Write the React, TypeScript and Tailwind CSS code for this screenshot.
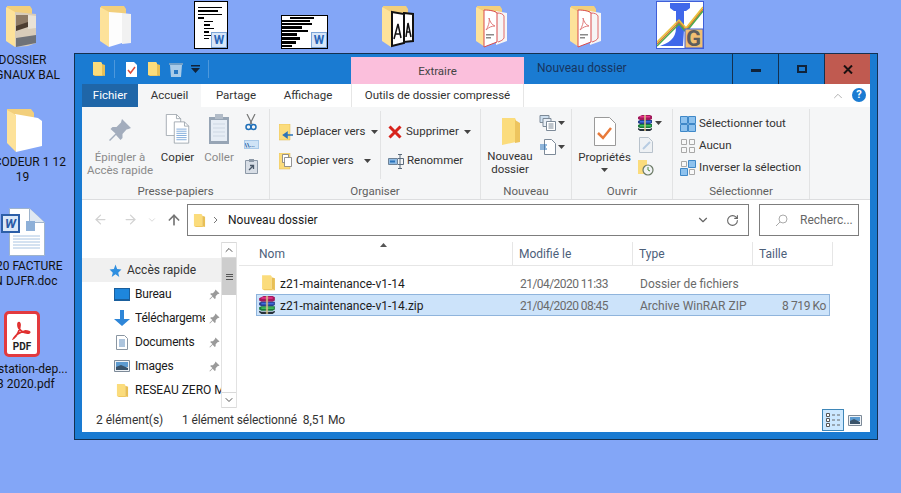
import { ArrowLeft, ArrowRight, ArrowUp, ChevronDown, ChevronUp, RotateCw } from "lucide-react";
import type { ReactNode } from "react";

const Caret = () => (
  <svg width="7" height="4" viewBox="0 0 7 4" className="shrink-0">
    <path d="M0 0h7L3.500 4z" fill="#444" />
  </svg>
);

const SmallFolder = ({ size = 16 }: { size?: number }) => (
  <svg width={size} height={size * 1.15} viewBox="0 0 14 16" className="shrink-0">
    <path d="M1 1h8l1 1v12H1z" fill="#fbdc7c" />
    <path d="M10 3l3 1v11l-3-1z" fill="#e8bf55" />
    <path d="M1 14h9l3 1H3z" fill="#f0c860" />
  </svg>
);

const BigFolder = ({ children }: { children?: ReactNode }) => (
  <svg width="48" height="48" viewBox="0 0 48 48" className="absolute inset-0">
    <path d="M7 5h23l2 3v6H7z" fill="#f2cf7c" />
    <path d="M6 6l9 5v35l-9-6z" fill="#fde29a" />
    {children}
  </svg>
);

const WinRar = ({ size = 16 }: { size?: number }) => (
  <svg width={size} height={size} viewBox="0 0 16 16" className="shrink-0">
    <path d="M1 2l4-2h8l2 1v3l-2 1H3L1 4z" fill="#a3195b" />
    <path d="M3 1h10v1.500H3z" fill="#e5338a" />
    <path d="M1 6l2-1h12v3l-2 1H3L1 8z" fill="#26408f" />
    <path d="M3 6h11v1.500H3z" fill="#3f6ae0" />
    <path d="M1 10l2-1h12v3l-2 1H3l-2-1z" fill="#1b7a3c" />
    <path d="M3 10h11v1.500H3z" fill="#3fbf5d" />
    <path d="M1 13l2 1h10l2-1v1.500L13 16H3l-2-1.500z" fill="#26303a" />
    <path d="M7 0h2v16H7z" fill="#d9c48a" opacity=".75" />
  </svg>
);

const Pin = ({ size = 14, color = "#9a9a9a" }: { size?: number; color?: string }) => (
  <svg width={size} height={size} viewBox="0 0 24 24" className="shrink-0">
    <path d="M14 1l9 9-2.500 1-2 .5-4 4.500 0 4-2 2-4.500-5L2 23l-1-1 6.500-6.500-5-4.500 2-2 4 0L13 4.500l.5-2z" fill={color} />
  </svg>
);

const Doc = ({ w, h, lines = 0 }: { w: number; h: number; lines?: number }) => (
  <svg width={w} height={h} viewBox="0 0 20 26" className="shrink-0">
    <path d="M1.500.5h12l5 5v20h-17z" fill="#fff" stroke="#9aa2aa" />
    <path d="M13.500.5v5h5" fill="none" stroke="#9aa2aa" />
    {Array.from({ length: lines }).map((_, i) => (
      <path key={i} d={`M4 ${9 + i * 2.500}h12`} stroke="#6f9fd6" strokeWidth="1" />
    ))}
  </svg>
);

const RibbonGroup = ({ width, label, children }: { width: string; label: string; children: ReactNode }) => (
  <div className={`${width} h-full flex flex-col border-r border-[#e2e3e4] shrink-0`}>
    <div className="flex-1 flex min-h-0">{children}</div>
    <div className="h-[18px] text-center text-[#5f5f5f] leading-[20px]">{label}</div>
  </div>
);

const ScrollBtn = ({ children }: { children: ReactNode }) => (
  <div className="h-[16px] flex items-center justify-center border-y border-[#d9d9d9] bg-white text-[#555]">{children}</div>
);

const NavItem = ({
  icon,
  label,
  pinned = true,
}: {
  icon: ReactNode;
  label: string;
  pinned?: boolean;
}) => (
  <div className="h-[24px] flex items-center pl-[29px] relative">
    <div className="w-[22px] shrink-0 flex justify-center">{icon}</div>
    <span className={`ml-[2px] whitespace-nowrap overflow-hidden text-[#1a1a1a] ${pinned ? "w-[70px] tracking-[-0.2px]" : "w-[86px]"}`}>
      {label}
    </span>
    {pinned && (
      <span className="absolute left-[127px]">
        <Pin size={11} />
      </span>
    )}
  </div>
);

const FileRow = ({
  icon,
  name,
  date,
  type,
  size,
  selected = false,
}: {
  icon: ReactNode;
  name: string;
  date: string;
  type: string;
  size?: string;
  selected?: boolean;
}) => (
  <div
    className={`h-[22px] w-[574px] flex items-center border ${
      selected ? "bg-[#cce3fa] border-[#8fb4dc]" : "border-transparent"
    }`}
  >
    <div className="w-[19px] flex justify-end shrink-0">{icon}</div>
    <span className="w-[244px] pl-[4px] pt-[1px] shrink-0 text-[#1c1c1c]">{name}</span>
    <span className="w-[120px] pt-[1px] shrink-0 text-[#6a6a6a] tracking-[-0.55px]">{date}</span>
    <span className="w-[120px] pt-[1px] shrink-0 text-[#6a6a6a]">{type}</span>
    <span className="w-[66px] pt-[1px] text-right shrink-0 text-[#6a6a6a] tracking-[-0.4px]">{size}</span>
  </div>
);

const DesktopLabel = ({ top, lines }: { top: string; lines: string[] }) => (
  <div className={`absolute left-[-30px] ${top} w-[105px] text-center leading-[15px] text-[#111]`}>
    {lines.map((l) => (
      <div key={l} className="whitespace-nowrap">{l}</div>
    ))}
  </div>
);

const WordBadge = () => (
  <div className="absolute right-0 bottom-0 w-[16px] h-[16px] bg-[#d7e6f8] border border-[#7ea6d8] flex items-center justify-center">
    <span className="text-[#2a66b8] font-bold text-[12px] leading-none">W</span>
  </div>
);

const PdfPages = () => (
  <>
    <path d="M26 10l11 2v28l-11 4z" fill="#f6f6f6" />
    <path d="M27 12c4 0 6 1 7 3v22c-1 2-3 3-6 4" fill="none" stroke="#e06a6a" strokeWidth="1" />
    <path d="M14 9c6 0 11 1 13 3v29l-13 5z" fill="#fff" stroke="#d94a4a" strokeWidth="1" />
    <path d="M16 29c2-3 4-8 3-12 1 4 3 7 6 8-3 0-6 1-9 4z" fill="none" stroke="#e07a7a" strokeWidth="1" />
    <path d="M16 33h8v1.500h-8zM16 36h5v1.500h-5z" fill="#8a8a8a" />
  </>
);

export default function App() {
  return (
    <div className="relative w-[901px] h-[493px] overflow-hidden bg-[#83a6f7] text-[12px] font-['Roboto','Noto_Sans',sans-serif]">
      {/* desktop icons */}
      <div className="absolute left-[0px] top-[1px] w-[48px] h-[48px]">
        <BigFolder>
          <path d="M15 11l21 2v29l-8 3-13 1z" fill="#d8ccba" />
          <path d="M16 14l12 0v9l-12 3z" fill="#8d7a66" />
          <path d="M16 25l12-4v5l-12 4z" fill="#4d3e31" />
          <path d="M28 14l8 1v12l-8 1z" fill="#e9e2d6" />
          <path d="M16 37l20-3v8l-20 4z" fill="#6f7278" />
        </BigFolder>
      </div>
      <div className="absolute left-[94px] top-[1px] w-[48px] h-[48px]">
        <BigFolder>
          <path d="M15 11l13 1v30l-13 4z" fill="#fdfdfd" />
          <path d="M28 12l9 1v29l-9 1z" fill="#f1f1f1" />
        </BigFolder>
      </div>
      <div className="absolute left-[194px] top-[1px] w-[34px] h-[48px] bg-white border border-black">
        <div className="pt-[5px] pl-[3px] flex flex-col gap-[2px]">
          <div className="w-[24px] h-[1px] bg-black" />
          <div className="w-[20px] h-[2px] bg-black" />
          <div className="w-[24px] h-[1px] bg-black" />
          <div className="w-[6px] h-[2px] bg-black" />
          <div className="w-[9px] h-[1px] ml-[6px] bg-black" />
          <div className="w-[6px] h-[2px] ml-[6px] bg-black" />
          <div className="w-[10px] h-[1px] ml-[6px] bg-black" />
          <div className="w-[5px] h-[2px] ml-[6px] bg-black" />
          <div className="w-[8px] h-[1px] ml-[6px] bg-black" />
          <div className="w-[5px] h-[1px] ml-[6px] bg-black" />
        </div>
        <WordBadge />
      </div>
      <div className="absolute left-[281px] top-[15px] w-[47px] h-[34px] bg-white border border-black">
        <div className="pt-[1px] flex flex-col gap-[1px]">
          <div className="w-[24px] h-[2px] ml-[8px] bg-black" />
          <div className="w-[28px] h-[2px] bg-black" />
          <div className="w-[30px] h-[2px] bg-black" />
          <div className="w-[20px] h-[3px] bg-black" />
          <div className="w-[26px] h-[2px] bg-black" />
          <div className="w-[15px] h-[3px] bg-black" />
          <div className="w-[18px] h-[3px] bg-black" />
          <div className="w-[14px] h-[3px] bg-black" />
          <div className="w-[10px] h-[2px] bg-black" />
        </div>
        <WordBadge />
      </div>
      <div className="absolute left-[376px] top-[1px] w-[48px] h-[48px]">
        <BigFolder>
          <path d="M28 12l9 1v27l-9 1z" fill="#fff" stroke="#111" strokeWidth="2" />
          <path d="M16 11l12 2v29l-12 3z" fill="#fff" stroke="#111" strokeWidth="2" />
          <path d="M18 38l4-15 3 14M19.500 33h4M30 36l2-14 3 14M31 31h3" fill="none" stroke="#111" strokeWidth="1.500" />
        </BigFolder>
      </div>
      <div className="absolute left-[470px] top-[1px] w-[48px] h-[48px]">
        <BigFolder>
          <PdfPages />
        </BigFolder>
      </div>
      <div className="absolute left-[564px] top-[1px] w-[48px] h-[48px]">
        <BigFolder>
          <PdfPages />
        </BigFolder>
      </div>
      <div className="absolute left-[656px] top-[1px] w-[48px] h-[48px] bg-white border border-[#3f5fd8] overflow-hidden">
        <svg width="46" height="46" viewBox="0 0 46 46">
          <path d="M13 1h20v5l-4 3h-2v19l-1 16H3c8-3 16-7 16-18V9h-2l-4-3z" fill="#3f67ea" />
          <path d="M0 42L22 20l7 8L46 7" fill="none" stroke="#e0762c" strokeWidth="1.500" />
          <path d="M0 40L22 18l7 8L46 5" fill="none" stroke="#e9c33b" strokeWidth="1.500" />
          <path d="M0 44L22 22l7 8L46 9" fill="none" stroke="#4ba84d" strokeWidth="1.500" />
          <path d="M28 27h18v19H28z" fill="#f1bf72" stroke="#3f5fd8" />
        </svg>
        <span className="absolute right-[2px] bottom-[-2px] text-[22px] leading-[22px] font-bold text-[#5d5d5d]">G</span>
      </div>

      <div className="absolute left-[6px] top-[107px] w-[34px] h-[46px]">
        <svg width="38" height="46" viewBox="0 0 38 46">
          <path d="M1 2h24l3 4v6H1z" fill="#f2cf7c" />
          <path d="M9 7l23 4 4 3v25l-26 6z" fill="#fff" />
          <path d="M1 3l9 5v37l-9-9z" fill="#fde29a" />
        </svg>
      </div>
      <div className="absolute left-[1px] top-[208px] w-[44px] h-[48px]">
        <svg width="44" height="48" viewBox="0 0 44 48">
          <path d="M8.500.5h20l15 14v33h-35z" fill="#fff" stroke="#9fb4cc" />
          <path d="M28.500.5v14h15" fill="#dfe8f2" stroke="#9fb4cc" />
          <path d="M25 13h9v10h-9z" fill="#8eb0d8" />
          <path d="M12 28h27M12 31h27M12 34h27M12 37h27M12 40h27" stroke="#a9c4e2" />
        </svg>
        <div className="absolute left-[0px] top-[6px] w-[19px] h-[19px] bg-[#dbe8f8] border-2 border-[#2d5fa8] flex items-center justify-center">
          <span className="text-[#2a5aa6] font-bold italic text-[13px] leading-none">W</span>
        </div>
      </div>
      <div className="absolute left-[4px] top-[311px] w-[36px] h-[46px] bg-white border-[3px] border-[#e23a3f] rounded-[5px] flex flex-col items-center justify-end pb-[1px]">
        <svg width="20" height="20" viewBox="0 0 20 20" className="absolute top-[6px]">
          <path d="M2 18c3-2 6-8 6-13 0-3-2-3-2 0 0 4 5 9 11 8 2-1-1-2-4-2-4 1-9 3-11 7z" fill="none" stroke="#e02f2f" strokeWidth="1.800" />
        </svg>
        <span className="text-[10px] leading-[12px] font-bold text-[#222]">PDF</span>
      </div>

      <DesktopLabel top="top-[53px]" lines={["DOSSIER", "SIGNAUX BAL"]} />
      <DesktopLabel top="top-[155px]" lines={["DECODEUR 1 12", "19"]} />
      <DesktopLabel top="top-[259px]" lines={["2020 FACTURE", "EN DJFR.doc"]} />
      <DesktopLabel top="top-[362px]" lines={["attestation-dep...", "03 2020.pdf"]} />

      {/* explorer window */}
      <div className="absolute left-[74px] top-[53px] w-[804px] h-[387px] border border-[#14304f] bg-[#1a7bd2] px-[7px] pb-[7px] flex flex-col text-[#333]">
        {/* title bar */}
        <div className="h-[30px] flex shrink-0 relative">
          <div className="w-[269px] flex items-center pl-[10px]">
            <SmallFolder size={14} />
            <div className="w-px h-[18px] bg-[#4d98dc] ml-[8px]" />
            <svg width="13" height="17" viewBox="0 0 13 17" className="ml-[10px]">
              <path d="M1 1h8l3 3v12H1z" fill="#fff" />
              <path d="M3 9l2.500 3L10 6" fill="none" stroke="#dd4a3a" strokeWidth="1.500" />
            </svg>
            <span className="ml-[9px]"><SmallFolder size={14} /></span>
            <svg width="14" height="17" viewBox="0 0 14 17" className="ml-[8px]">
              <path d="M1 3h12v1l-1 12H2L1 4z" fill="#a9cbe8" />
              <path d="M0 2h14v2H0z" fill="#6f9fc8" />
              <path d="M5 9h4v4H5z" fill="#2a79c4" />
            </svg>
            <svg width="9" height="8" viewBox="0 0 9 8" className="ml-[8px]">
              <path d="M0 0h9v1.500H0zM0 3h9L4.500 8z" fill="#10233a" />
            </svg>
            <div className="w-px h-[18px] bg-[#4d98dc] ml-[8px]" />
          </div>
          <div className="w-[173px] mt-[3px] h-[27px] bg-[#fbbfdc] text-center leading-[29px] text-[#444] text-[11.5px]">Extraire</div>
          <div className="pl-[13px] flex-1 leading-[29px] text-[#17355f]">Nouveau dossier</div>
          <div className="w-[46px] flex items-center justify-center border-l border-[#14304f]">
            <div className="w-[10px] h-[3px] bg-[#10233a] mt-[3px]" />
          </div>
          <div className="w-[46px] flex items-center justify-center border-l border-[#14304f]">
            <div className="w-[10px] h-[8px] border-2 border-[#10233a]" />
          </div>
          <div className="w-[46px] flex items-center justify-center border-l border-[#14304f] bg-[#c05a50]">
            <svg width="10" height="9" viewBox="0 0 10 9">
              <path d="M1 .5l8 8M9 .5l-8 8" stroke="#1a1010" strokeWidth="2" />
            </svg>
          </div>
        </div>

        {/* tabs */}
        <div className="h-[23px] bg-white flex items-center shrink-0 relative text-[11.5px]">
          <div className="w-[56px] h-full bg-[#1f66a8] text-white flex items-center justify-center">Fichier</div>
          <div className="w-[63px] h-full bg-[#f5f6f7] flex items-center justify-center">Accueil</div>
          <div className="w-[70px] text-center">Partage</div>
          <div className="w-[74px] text-center">Affichage</div>
          <div className="w-[173px] ml-[6px] h-full border-l border-r border-[#e6e6e6] flex items-center justify-center">
            Outils de dossier compressé
          </div>
          <ChevronUp className="absolute right-[25px] text-[#a8a8a8]" size={14} strokeWidth={1.500} />
          <div className="absolute right-[4px] top-[4px] w-[14px] h-[14px] rounded-full bg-[#1a7bd2] text-white font-bold text-[11px] leading-[14px] text-center">?</div>
        </div>

        {/* ribbon */}
        <div className="h-[93px] bg-[#f5f6f7] border-b border-[#dcdddf] flex shrink-0 pt-[2px] text-[11.5px]">
          <RibbonGroup width="w-[188px]" label="Presse-papiers">
            <div className="w-[76px] flex flex-col items-center text-[#8a8a8a] leading-[13px] pt-[9px]">
              <div className="h-[33px]"><Pin size={24} color="#a3adbd" /></div>
              <div className="whitespace-nowrap">Épingler à</div>
              <div className="whitespace-nowrap">Accès rapide</div>
            </div>
            <div className="w-[39px] flex flex-col items-center leading-[13px] pt-[5px]">
              <div className="h-[37px] relative w-[26px]">
                <span className="absolute left-0 top-0"><Doc w={17} h={22} /></span>
                <span className="absolute left-[8px] top-[7px]"><Doc w={17} h={23} lines={6} /></span>
              </div>
              <div>Copier</div>
            </div>
            <div className="w-[44px] flex flex-col items-center text-[#8a8a8a] leading-[13px] pt-[5px]">
              <svg width="22" height="30" viewBox="0 0 22 30" className="mb-[7px] shrink-0">
                <path d="M1 3h20v27H1z" fill="#97a5b5" />
                <path d="M3 6h16v21H3z" fill="#e6edf5" />
                <path d="M5 10h12M5 14h12M5 18h12M5 22h12" stroke="#cdd7e3" />
                <path d="M7 0h8v5H7z" fill="#b2bcc8" />
              </svg>
              <div>Coller</div>
            </div>
            <div className="w-[20px] flex flex-col items-center pt-[5px] gap-[9px]">
              <svg width="12" height="17" viewBox="0 0 12 17">
                <path d="M2 0l5 10M10 0L5 10" stroke="#777" strokeWidth="1.200" fill="none" />
                <circle cx="3.500" cy="13" r="2.500" fill="none" stroke="#1f6fb8" strokeWidth="1.500" />
                <circle cx="8.500" cy="13" r="2.500" fill="none" stroke="#1f6fb8" strokeWidth="1.500" />
              </svg>
              <div className="w-[15px] h-[9px] bg-[#cfe3f6] border border-[#a9c9e8] text-[6px] leading-[7px] text-[#1f5a9a] font-bold overflow-hidden">\\...</div>
              <svg width="13" height="16" viewBox="0 0 13 16">
                <path d="M.5 2.500h12v13H.5z" fill="#d8dee6" stroke="#8c98a6" />
                <path d="M4 1h5v3H4z" fill="#8c98a6" />
                <path d="M4 12l4-4M5 7.500h3.500V11" stroke="#4a5868" fill="none" strokeWidth="1.300" />
              </svg>
            </div>
          </RibbonGroup>

          <RibbonGroup width="w-[211px]" label="Organiser">
            <div className="w-[111px] pl-[9px] pt-[13px] flex flex-col gap-[13px] border-r border-[#e2e3e4] my-[2px] whitespace-nowrap">
              <div className="flex items-center h-[16px]">
                <svg width="14" height="17" viewBox="0 0 14 17" className="shrink-0">
                  <path d="M0 0h11v16H0z" fill="#fbdc7c" stroke="#e0b94f" strokeWidth=".5" />
                  <path d="M14 11H8M8 8.500L4.500 11 8 13.500z" stroke="#2d74b8" fill="#2d74b8" strokeWidth="1.500" />
                </svg>
                <span className="ml-[3px]">Déplacer vers</span>
                <span className="ml-[6px]"><Caret /></span>
              </div>
              <div className="flex items-center h-[16px]">
                <svg width="14" height="17" viewBox="0 0 14 17" className="shrink-0">
                  <path d="M0 0h11v16H0z" fill="#fbdc7c" stroke="#e0b94f" strokeWidth=".5" />
                  <path d="M3.500 1.500h6v8h-6z" fill="#fff" stroke="#7a7a7a" strokeWidth=".8" />
                  <path d="M5.500 4.500h7v9h-7z" fill="#fff" stroke="#7a7a7a" strokeWidth=".8" />
                </svg>
                <span className="ml-[3px]">Copier vers</span>
                <span className="ml-[10px]"><Caret /></span>
              </div>
            </div>
            <div className="pl-[7px] pt-[15px] flex flex-col gap-[13px]">
              <div className="flex items-center h-[16px]">
                <svg width="14" height="14" viewBox="0 0 14 14" className="shrink-0">
                  <path d="M1.500 1.500l11 11M12.500 1.500l-11 11" stroke="#d7231c" strokeWidth="3" />
                </svg>
                <span className="ml-[4px]">Supprimer</span>
                <span className="ml-[5px]"><Caret /></span>
              </div>
              <div className="flex items-center h-[16px]">
                <svg width="16" height="15" viewBox="0 0 16 15" className="shrink-0">
                  <path d="M.5 4.500h9v6h-9z" fill="#8fbbe4" stroke="#6e8296" />
                  <path d="M2 6.500h5v2H2z" fill="#2a74bc" />
                  <path d="M12 1v13M10 .5h4M10 14.500h4M10 4.500h5.500v6H10" stroke="#5a6a7a" fill="none" />
                </svg>
                <span className="ml-[3px]">Renommer</span>
              </div>
            </div>
          </RibbonGroup>

          <RibbonGroup width="w-[91px]" label="Nouveau">
            <div className="w-[58px] flex flex-col items-center leading-[13px] pt-[9px]">
              <svg width="20" height="27" viewBox="0 0 20 27" className="mb-[5px] ml-[1px] shrink-0">
                <path d="M1 0h13l1 2v22L1 27z" fill="#fbdc7c" />
                <path d="M14 2l5 3v19l-5 1z" fill="#edc45e" />
              </svg>
              <div>Nouveau</div>
              <div>dossier</div>
            </div>
            <div className="flex flex-col pt-[6px] gap-[8px]">
              <div className="flex items-center gap-[1px]">
                <svg width="18" height="16" viewBox="0 0 18 16">
                  <path d="M1 .5h9v7H1z" fill="#cfe0f0" stroke="#7d8a98" />
                  <path d="M4 3.500h8v8H4z" fill="#e8eef5" stroke="#7d8a98" />
                  <path d="M7.500 6.500h9v9h-9z" fill="#fff" stroke="#7d8a98" />
                  <path d="M9.500 9h5M9.500 11h5M9.500 13h5" stroke="#7d8a98" />
                </svg>
                <Caret />
              </div>
              <div className="flex items-center gap-[1px]">
                <svg width="18" height="16" viewBox="0 0 18 16">
                  <path d="M5.500.5h7l4 4v11h-11z" fill="#fff" stroke="#7d8a98" />
                  <path d="M1 6h7M1 8h6M1 10h7" stroke="#2a74bc" />
                </svg>
                <Caret />
              </div>
            </div>
          </RibbonGroup>

          <RibbonGroup width="w-[101px]" label="Ouvrir">
            <div className="w-[65px] flex flex-col items-center leading-[13px] pt-[8px]">
              <svg width="22" height="29" viewBox="0 0 22 29" className="mb-[5px] shrink-0">
                <path d="M.5.500h15l6 6v22H.5z" fill="#fff" stroke="#9a9a9a" />
                <path d="M4 16l5 5 8-10" fill="none" stroke="#e87a3a" strokeWidth="2.500" />
              </svg>
              <div>Propriétés</div>
              <div className="pt-[4px]"><Caret /></div>
            </div>
            <div className="flex flex-col pt-[6px] gap-[6px] pl-[0px]">
              <div className="flex items-center gap-[2px]">
                <WinRar />
                <Caret />
              </div>
              <svg width="15" height="16" viewBox="0 0 15 16" className="ml-[2px]">
                <path d="M.5.500h9l4 4v11H.5z" fill="#eef1f4" stroke="#b8c2cc" />
                <path d="M4 12l7-7" stroke="#b6cce2" strokeWidth="2" />
              </svg>
              <svg width="17" height="17" viewBox="0 0 17 17">
                <path d="M1 1h9v14H1z" fill="#fbdc7c" />
                <circle cx="11" cy="11" r="5" fill="#f1f3f5" stroke="#6b7a66" strokeWidth="1.200" />
                <path d="M11 8v3l2 1" stroke="#4a8a3a" fill="none" />
              </svg>
            </div>
          </RibbonGroup>

          <RibbonGroup width="w-[137px]" label="Sélectionner">
            <div className="pl-[7px] pt-[7px] flex flex-col gap-[6px]">
              <div className="flex items-center h-[16px]">
                <svg width="16" height="16" viewBox="0 0 16 16" className="shrink-0">
                  <path d="M.5.500h7v7h-7zM8.500.500h7v7h-7zM.5 8.500h7v7h-7zM8.500 8.500h7v7h-7z" fill="#8ec2ee" stroke="#3f88c8" />
                </svg>
                <span className="ml-[3px] whitespace-nowrap">Sélectionner tout</span>
              </div>
              <div className="flex items-center h-[16px]">
                <svg width="16" height="16" viewBox="0 0 16 16" className="shrink-0">
                  <path d="M1.500 1.500h5v5h-5zM9.500 1.500h5v5h-5zM1.500 9.500h5v5h-5zM9.500 9.500h5v5h-5z" fill="#f8f8f8" stroke="#a8a8a8" />
                </svg>
                <span className="ml-[3px]">Aucun</span>
              </div>
              <div className="flex items-center h-[16px]">
                <svg width="16" height="16" viewBox="0 0 16 16" className="shrink-0">
                  <path d="M1.500 1.500h5v5h-5zM9.500 9.500h5v5h-5z" fill="#f8f8f8" stroke="#a8a8a8" />
                  <path d="M8.500.500h7v7h-7zM.5 8.500h7v7h-7z" fill="#8ec2ee" stroke="#3f88c8" />
                </svg>
                <span className="ml-[3px] whitespace-nowrap">Inverser la sélection</span>
              </div>
            </div>
          </RibbonGroup>
        </div>

        {/* address row */}
        <div className="h-[40px] bg-white flex items-start pt-[4px] shrink-0">
          <div className="w-[105px] h-[31px] flex items-center text-[#d2d2d2] pl-[11px]">
            <ArrowLeft size={15} />
            <ArrowRight size={15} className="ml-[15px]" />
            <ChevronDown size={10} className="ml-[9px]" />
            <ArrowUp size={16} strokeWidth={2.500} className="ml-[9px] text-[#757575]" />
          </div>
          <div className="w-[562px] h-[32px] border border-[#7d7d7d] flex items-center pl-[5px]">
            <SmallFolder size={13} />
            <svg width="5" height="8" viewBox="0 0 5 8" className="ml-[7px]">
              <path d="M1 1l3 3-3 3" fill="none" stroke="#777" />
            </svg>
            <span className="ml-[10px] text-[#1a1a1a]">Nouveau dossier</span>
            <ChevronDown size={14} strokeWidth={2} className="ml-auto text-[#666]" />
            <RotateCw size={13} strokeWidth={2} className="ml-[16px] mr-[9px] text-[#666]" />
          </div>
          <div className="w-[100px] h-[32px] ml-[10px] border border-[#7d7d7d] flex items-center pl-[15px] text-[#666]">
            <svg width="13" height="13" viewBox="0 0 13 13">
              <circle cx="8" cy="5" r="4" fill="none" stroke="#aaa" />
              <path d="M5 8l-4 4" stroke="#aaa" />
            </svg>
            <span className="ml-[12px]">Recherc...</span>
          </div>
        </div>

        {/* content */}
        <div className="h-[168px] bg-white flex shrink-0">
          <div className="w-[139px] pt-[18px] overflow-hidden shrink-0">
            <div className="h-[24px] bg-[#f0f0f0] flex items-center pl-[27px]">
              <svg width="13" height="13" viewBox="0 0 24 24" className="shrink-0">
                <path d="M12 1l3 8 8 1-6 6 2 8-7-5-7 5 2-8-6-6 8-1z" fill="#2f8fe0" />
              </svg>
              <span className="ml-[5px]">Accès rapide</span>
            </div>
            <NavItem
              label="Bureau"
              icon={<div className="w-[16px] h-[13px] bg-[#1e86dc] border border-[#1a5e9c] border-b-[2px]" />}
            />
            <NavItem
              label="Téléchargements"
              icon={
                <svg width="16" height="16" viewBox="0 0 16 16">
                  <path d="M6 0h4v9h6l-8 7-8-7h6z" fill="#2e86d8" />
                </svg>
              }
            />
            <NavItem
              label="Documents"
              icon={
                <svg width="12" height="15" viewBox="0 0 12 15">
                  <path d="M.5.500h8l3 3v11H.5z" fill="#fff" stroke="#8a96a2" />
                  <path d="M3 5h6M3 7h6M3 9h6M3 11h6" stroke="#5a8abc" />
                </svg>
              }
            />
            <NavItem
              label="Images"
              icon={
                <svg width="16" height="12" viewBox="0 0 16 12">
                  <path d="M.5.500h15v11H.5z" fill="#eef2f6" stroke="#7d8a98" />
                  <path d="M2 2h12v5H2z" fill="#5d9bd0" />
                  <path d="M2 7l5-2 7 3v2H2z" fill="#39536a" />
                </svg>
              }
            />
            <NavItem label="RESEAU ZERO MAINTENANCE" pinned={false} icon={<SmallFolder size={13} />} />
            <NavItem label="" pinned={false} icon={<SmallFolder size={13} />} />
          </div>
          <div className="w-[16px] mt-[2px] flex flex-col shrink-0 border-x border-[#e2e2e2] justify-between">
            <div>
              <ScrollBtn><ChevronUp size={12} /></ScrollBtn>
              <div className="h-[37px] bg-[#cdcdcd] flex items-center justify-center">
                <div className="w-[7px] h-[6px] border-y border-[#555] relative after:content-[''] after:absolute after:left-0 after:right-0 after:top-[1.500px] after:h-px after:bg-[#555]" />
              </div>
            </div>
            <ScrollBtn><ChevronDown size={12} /></ScrollBtn>
          </div>
          <div className="flex-1 pt-[2px] pl-[2px] relative">
            <svg width="7" height="4" viewBox="0 0 7 4" className="absolute left-[143px] top-[3px]">
              <path d="M0 4h7L3.500 0z" fill="#555" />
            </svg>
            <div className="h-[24px] w-[594px] flex items-center border-b border-[#e6e6e6] text-[#4c607a]">
              <div className="w-[274px] pl-[20px] h-full flex items-center border-r border-[#e6e6e6]">Nom</div>
              <div className="w-[120px] pl-[6px] h-full flex items-center border-r border-[#e6e6e6]">Modifié le</div>
              <div className="w-[120px] pl-[6px] h-full flex items-center border-r border-[#e6e6e6]">Type</div>
              <div className="w-[80px] pl-[6px] h-full flex items-center border-r border-[#e6e6e6]">Taille</div>
            </div>
            <div className="pl-[17px] pt-[6px]">
              <FileRow
                icon={<SmallFolder size={15} />}
                name="z21-maintenance-v1-14"
                date="21/04/2020 11:33"
                type="Dossier de fichiers"
              />
              <FileRow
                selected
                icon={<WinRar size={18} />}
                name="z21-maintenance-v1-14.zip"
                date="21/04/2020 08:45"
                type="Archive WinRAR ZIP"
                size="8 719 Ko"
              />
            </div>
          </div>
        </div>

        {/* status bar */}
        <div className="h-[24px] bg-white flex items-center shrink-0 pl-[14px] pr-[8px]">
          <span className="w-[86px]">2 élément(s)</span>
          <span className="whitespace-pre tracking-[-0.1px]">1 élément sélectionné  8,51 Mo</span>
          <div className="ml-auto flex items-center gap-[4px]">
            <div className="w-[22px] h-[22px] bg-[#cce8ff] border border-[#3f87b8] flex items-center justify-center">
              <svg width="15" height="15" viewBox="0 0 15 15">
                <path d="M.5.500h3v3h-3zM.5 5.500h3v3h-3zM.5 10.500h3v3h-3z" fill="#fff" stroke="#555" />
                <path d="M6 2h3M11 2h3M6 7h3M11 7h3M6 12h3M11 12h3" stroke="#666" />
              </svg>
            </div>
            <svg width="14" height="11" viewBox="0 0 14 11">
              <path d="M.5.500h13v10H.5z" fill="#eef2f6" stroke="#7d8a98" />
              <path d="M2 2h10v4H2z" fill="#5d9bd0" />
              <path d="M2 6l4-2 6 3v2H2z" fill="#39536a" />
            </svg>
          </div>
        </div>
      </div>
    </div>
  );
}
